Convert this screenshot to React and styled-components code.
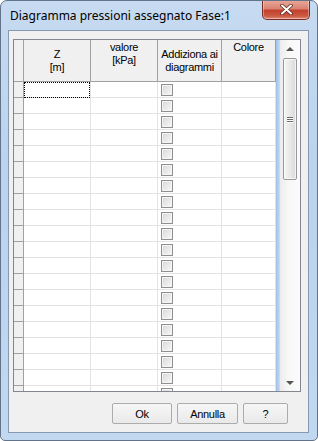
import React from "react";
import styled, { createGlobalStyle } from "styled-components";

const Global = createGlobalStyle`
	html, body {
		margin: 0;
		padding: 0;
		background: #ffffff;
	}
	* {
		box-sizing: border-box;
	}
`;

const Window = styled.div`
	width: 318px;
	height: 441px;
	display: flex;
	flex-direction: column;
	border: 1px solid #62738a;
	border-radius: 7px 7px 5px 5px;
	background: linear-gradient(180deg, #c6daf1 0%, #bcd2ed 40%, #c2d7f0 100%);
	padding: 0 8px 7px 7px;
	font-family: "Liberation Sans", Arial, sans-serif;
	overflow: hidden;
`;

const TitleBar = styled.div`
	height: 29px;
	display: flex;
	align-items: flex-start;
	justify-content: space-between;
	flex-shrink: 0;
`;

const Title = styled.span`
	font-family: "Noto Sans", "Liberation Sans", sans-serif;
	font-size: 12px;
	color: #000;
	margin: 7px 0 0 2px;
	line-height: 16px;
`;

const CloseButton = styled.div`
	width: 48px;
	height: 20px;
	margin-top: -1px;
	margin-right: -1px;
	border: 1px solid #7a2e27;
	border-top: none;
	border-radius: 0 0 5px 5px;
	background: linear-gradient(180deg, #e9a99b 0%, #d98473 45%, #c2412f 55%, #cc5a43 85%, #e0927c 100%);
	box-shadow: inset 0 0 0 1px rgba(255, 255, 255, 0.35);
	display: flex;
	align-items: center;
	justify-content: center;
`;

const Client = styled.div`
	flex: 1;
	display: flex;
	flex-direction: column;
	border: 1px solid #8599b3;
	background: #f0f0f0;
	padding: 8px 7px 8px 4px;
`;

const Grid = styled.div`
	height: 353px;
	display: flex;
	border: 1px solid #828790;
	background: #ffffff;
	overflow: hidden;
`;

const Table = styled.div`
	width: 262px;
	display: flex;
	flex-direction: column;
	overflow: hidden;
	flex-shrink: 0;
`;

const Row = styled.div`
	display: flex;
	flex-shrink: 0;
	height: ${(p) => (p.$header ? "42px" : "16px")};
`;

const RowHead = styled.div`
	width: 10px;
	flex-shrink: 0;
	background: #f0f0f0;
	border-right: 1px solid #a0a0a0;
	border-bottom: 1px solid #a0a0a0;
`;

const HeadCell = styled.div`
	width: ${(p) => p.$w}px;
	flex-shrink: 0;
	background: #f0f0f0;
	border-right: 1px solid #a0a0a0;
	border-bottom: 1px solid #a0a0a0;
	display: flex;
	flex-direction: column;
	align-items: center;
	justify-content: ${(p) => (p.$top ? "flex-start" : "center")};
	padding-top: ${(p) => (p.$top ? "1px" : "0")};
	font-size: 11px;
	line-height: 13px;
	letter-spacing: -0.3px;
	color: #000;
	text-align: center;
`;

const Cell = styled.div`
	position: relative;
	width: ${(p) => p.$w}px;
	flex-shrink: 0;
	border-right: 1px solid #e3e3e3;
	border-bottom: 1px solid #e3e3e3;
	&::after {
		content: "";
		display: ${(p) => (p.$focused ? "block" : "none")};
		position: absolute;
		inset: 0 0 -1px 0;
		border: 1px dotted #000;
	}
`;

const CheckCell = styled(Cell)`
	padding: 2px 0 0 3px;
`;

const CheckBox = styled.div`
	width: 12px;
	height: 12px;
	border: 1px solid #8f8f8f;
	background: linear-gradient(135deg, #d6d6d6 0%, #e8e8e8 50%, #f7f7f7 100%);
	box-shadow: inset 0 0 0 1px #f4f4f4;
`;

const Filler = styled.div`
	width: 4px;
	flex-shrink: 0;
	background: linear-gradient(90deg, #9fbde6 0%, #b9d0ef 60%, #cddcf2 100%);
`;

const ScrollBar = styled.div`
	width: 20px;
	flex-shrink: 0;
	display: flex;
	flex-direction: column;
	background: linear-gradient(90deg, #ececec 0%, #f7f7f7 40%, #fbfbfb 100%);
`;

const ArrowButton = styled.div`
	height: 17px;
	flex-shrink: 0;
	display: flex;
	align-items: center;
	justify-content: center;
	&::before {
		content: "";
		width: 0;
		height: 0;
		border-left: 4px solid transparent;
		border-right: 4px solid transparent;
		${(p) => (p.$down ? "border-top: 4px solid #555;" : "border-bottom: 4px solid #555;")}
	}
`;

const Track = styled.div`
	flex: 1;
	padding: 1px 3px 0 3px;
`;

const Thumb = styled.div`
	width: 14px;
	height: 122px;
	border: 1px solid #979797;
	border-radius: 2px;
	background: linear-gradient(90deg, #f4f4f4 0%, #e9e9e9 50%, #d9d9d9 100%);
	box-shadow: inset 0 0 0 1px rgba(255, 255, 255, 0.7);
	display: flex;
	flex-direction: column;
	align-items: center;
	justify-content: center;
	gap: 1px;
`;

const Grip = styled.span`
	width: 6px;
	height: 1px;
	background: #6b6b6b;
	box-shadow: 0 1px 0 #ffffff;
`;

const ButtonBar = styled.div`
	display: flex;
	justify-content: flex-end;
	gap: 5px;
	margin-top: 11px;
	padding-right: 13px;
	flex-shrink: 0;
`;

const Button = styled.button`
	width: ${(p) => p.$w}px;
	height: 21px;
	padding: 0;
	border: 1px solid #acacac;
	border-radius: 2px;
	background: linear-gradient(180deg, #f6f6f6 0%, #f0f0f0 50%, #e9e9e9 100%);
	font-family: "Liberation Sans", Arial, sans-serif;
	font-size: 11px;
	letter-spacing: -0.3px;
	color: #000;
`;

const columns = [
	{ key: "z", w: 67, lines: ["Z", "[m]"], top: false },
	{ key: "valore", w: 67, lines: ["valore", "[kPa]"], top: true },
	{ key: "add", w: 64, lines: ["Addiziona ai", "diagrammi"], top: false },
	{ key: "colore", w: 54, lines: ["Colore"], top: true },
];

const rows = Array.from({ length: 20 }, (_, i) => i);

const App = () => {
	return (
		<>
			<Global />
			<Window>
				<TitleBar>
					<Title>Diagramma pressioni assegnato Fase:1</Title>
					<CloseButton>
						<svg width="13" height="11" viewBox="0 0 13 11">
							<path d="M2 1.5 L11 9.5 M11 1.5 L2 9.5" stroke="#5b2a24" strokeWidth="3.6" strokeLinecap="round" />
							<path d="M2 1.5 L11 9.5 M11 1.5 L2 9.5" stroke="#ffffff" strokeWidth="2" strokeLinecap="round" />
						</svg>
					</CloseButton>
				</TitleBar>
				<Client>
					<Grid>
						<Table>
							<Row $header>
								<RowHead />
								{columns.map((c) => (
									<HeadCell key={c.key} $w={c.w} $top={c.top}>
										{c.lines.map((l) => (
											<span key={l}>{l}</span>
										))}
									</HeadCell>
								))}
							</Row>
							{rows.map((r) => (
								<Row key={r}>
									<RowHead />
									<Cell $w={67} $focused={r === 0} />
									<Cell $w={67} />
									<CheckCell $w={64}>
										<CheckBox />
									</CheckCell>
									<Cell $w={54} />
								</Row>
							))}
						</Table>
						<Filler />
						<ScrollBar>
							<ArrowButton />
							<Track>
								<Thumb>
									<Grip />
									<Grip />
									<Grip />
								</Thumb>
							</Track>
							<ArrowButton $down />
						</ScrollBar>
					</Grid>
					<ButtonBar>
						<Button $w={60}>Ok</Button>
						<Button $w={61}>Annulla</Button>
						<Button $w={45}>?</Button>
					</ButtonBar>
				</Client>
			</Window>
		</>
	);
};

export default App;
